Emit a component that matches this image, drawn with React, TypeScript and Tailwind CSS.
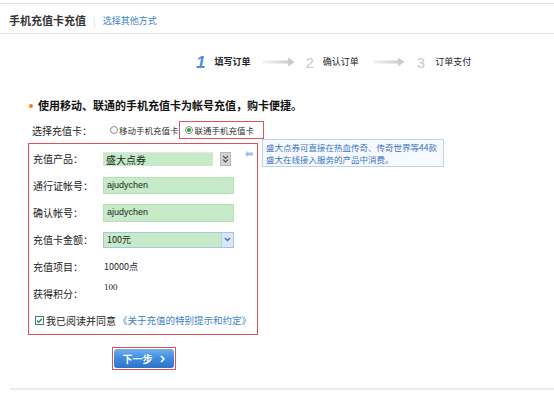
import React from "react";

function StepArrow({ className }: { className?: string }) {
  return (
    <svg width="32" height="10" viewBox="0 0 32 10" className={className}>
      <defs>
        <linearGradient id="ag" x1="0" x2="1" y1="0" y2="0">
          <stop offset="0" stopColor="#f2f2f2" />
          <stop offset="1" stopColor="#c4c4c4" />
        </linearGradient>
      </defs>
      <path d="M0 3.5h25V0.5L31.5 5 25 9.5V6.5H0z" fill="url(#ag)" />
    </svg>
  );
}

function Row({ label, children }: { label: string; children?: React.ReactNode }) {
  return (
    <div className="h-[27px] flex items-center">
      <span className="w-[74px] pl-[4px] text-[10px] text-[#222] shrink-0">{label}</span>
      {children}
    </div>
  );
}

export default function App() {
  return (
    <div className="w-[554px] h-[395px] bg-white overflow-hidden text-[#222]" style={{ fontFamily: '"Noto Sans CJK SC", "Liberation Sans", sans-serif' }}>
      <div className="h-[3px]" />
      <div className="h-[31px] border-y border-[#dedede] flex items-center pl-[9px] pt-[4px]">
        <span className="text-[11px] font-bold text-[#333] leading-none">手机充值卡充值</span>
        <span className="mx-[7px] text-[10px] text-[#ddd] leading-none">|</span>
        <a className="text-[9px] text-[#3a7fc6] leading-none">选择其他方式</a>
      </div>

      <div className="h-[56px] flex items-center pl-[196px]">
        <span className="text-[17px] font-bold italic text-[#4b8ed6] leading-none" style={{ fontFamily: '"Liberation Sans", sans-serif' }}>1</span>
        <span className="ml-[9px] text-[9px] font-bold text-[#222]">填写订单</span>
        <StepArrow className="ml-[13px]" />
        <span className="ml-[10px] text-[15px] text-[#c8c8c8] leading-none" style={{ fontFamily: '"Liberation Sans", sans-serif' }}>2</span>
        <span className="ml-[9px] text-[9px] text-[#222]">确认订单</span>
        <StepArrow className="ml-[14px]" />
        <span className="ml-[12px] text-[15px] text-[#c8c8c8] leading-none" style={{ fontFamily: '"Liberation Sans", sans-serif' }}>3</span>
        <span className="ml-[10px] text-[9px] text-[#222]">订单支付</span>
      </div>

      <div className="h-[31px] flex items-center pl-[29px]">
        <span className="w-[4px] h-[4px] rounded-full bg-[#f07c1c]" />
        <span className="ml-[5px] text-[11px] font-bold text-[#111]">使用移动、联通的手机充值卡为帐号充值，购卡便捷。</span>
      </div>

      <div className="h-[18px] flex items-center pl-[32px]">
        <span className="w-[78px] text-[10px] text-[#222]">选择充值卡：</span>
        <span className="w-[8px] h-[8px] rounded-full border border-[#8a8a8a] bg-white" />
        <span className="ml-[1px] text-[8.5px] text-[#333] whitespace-nowrap">移动手机充值卡</span>
        <div className="ml-[0px] h-[18px] w-[85px] border border-[#e0505a] flex items-center pl-[5px]">
          <span className="w-[8px] h-[8px] rounded-full border border-[#8a8a8a] bg-white flex items-center justify-center">
            <span className="w-[4px] h-[4px] rounded-full bg-[#2e9a3e]" />
          </span>
          <span className="ml-[2px] text-[8.5px] text-[#333] whitespace-nowrap">联通手机充值卡</span>
        </div>
      </div>

      <div className="flex items-start">
        <div className="ml-[28px] mt-[4px] w-[230px] h-[192px] border border-[#e0505a] pt-[1px]">
          <Row label="充值产品：">
            <div className="w-[110px] h-[14px] bg-[#c7ebc8] border-t border-[#e4e4e4] flex items-center pl-[3px] text-[10px] text-[#222]">盛大点券</div>
            <div className="ml-[7px] w-[11px] h-[14px] bg-[#d4d4d4] border border-[#b8b8b8] flex items-center justify-center">
              <svg width="7" height="8" viewBox="0 0 7 8"><path d="M1 1l2.5 2.5L6 1M1 4.5l2.5 2.5L6 4.5" stroke="#555" strokeWidth="1.2" fill="none" /></svg>
            </div>
            <svg width="8" height="6" viewBox="0 0 8 6" className="ml-[14px] self-start mt-[6px]"><path d="M0 3l3-3v1.5h5v3H3V6z" fill="#9cc4ea" /></svg>
          </Row>
          <Row label="通行证帐号：">
            <div className="w-[131px] h-[17px] bg-[#c7ebc8] border border-[#b7dfb8] flex items-center pl-[3px] text-[9px] text-[#222]" style={{ fontFamily: '"Liberation Sans", sans-serif' }}>ajudychen</div>
          </Row>
          <Row label="确认帐号：">
            <div className="w-[131px] h-[18px] bg-[#c7ebc8] border border-[#b7dfb8] flex items-center pl-[3px] text-[9px] text-[#222]" style={{ fontFamily: '"Liberation Sans", sans-serif' }}>ajudychen</div>
          </Row>
          <Row label="充值卡金额：">
            <div className="w-[131px] h-[16px] bg-[#c7ebc8] border border-[#a9c4e2] flex items-center text-[9px] text-[#222]">
              <span className="flex-1 pl-[3px]">100元</span>
              <div className="w-[12px] h-full bg-[#dbe7f7] border-l border-[#b9cde8] flex items-center justify-center">
                <svg width="7" height="5" viewBox="0 0 7 5"><path d="M1 1l2.5 2.5L6 1" stroke="#3a6fb8" strokeWidth="1.4" fill="none" /></svg>
              </div>
            </div>
          </Row>
          <Row label="充值项目：">
            <span className="ml-[1px] text-[9px] text-[#222]">10000点</span>
          </Row>
          <Row label="获得积分：">
            <span className="ml-[1px] self-start mt-[1px] text-[9px] text-[#222]" style={{ fontFamily: '"Liberation Serif", serif' }}>100</span>
          </Row>
          <div className="h-[27px] flex items-center pl-[6px] whitespace-nowrap">
            <svg width="9" height="9" viewBox="0 0 9 9" className="shrink-0"><rect x="0.5" y="0.5" width="8" height="8" fill="#fff" stroke="#3f7b91" /><path d="M2 4.5l1.8 1.8L7 2.8" stroke="#2a8a3a" strokeWidth="1.3" fill="none" /></svg>
            <span className="ml-[2px] text-[10px] text-[#222]">我已阅读并同意</span>
            <span className="ml-[2px] text-[9.5px] text-[#3a7fc6]">《关于充值的特别提示和约定》</span>
          </div>
        </div>
        <div className="ml-[4px] w-[182px] h-[28px] border border-[#bcd3ea] bg-[#f6f9fd] px-[3px] pt-[1px] text-[8.5px] leading-[12px] text-[#3a74c0] whitespace-nowrap">
          <div>盛大点券可直接在热血传奇、传奇世界等44款</div>
          <div>盛大在线接入服务的产品中消费。</div>
        </div>
      </div>

      <div className="mt-[12px] ml-[112px] w-[64px] h-[23px] border border-[#e0505a] p-[1px]">
        <button className="w-full h-full rounded-[3px] bg-gradient-to-b from-[#6fb0ee] via-[#3e8ce0] to-[#2c74c8] flex items-center justify-center gap-[7px] text-white text-[10px] font-bold">
          <span>下一步</span>
          <svg width="6" height="8" viewBox="0 0 6 8"><path d="M1 1l3 3-3 3" stroke="#fff" strokeWidth="1.6" fill="none" /></svg>
        </button>
      </div>

      <div className="mt-[18px] ml-[10px] border-t-2 border-[#ececec]" />
    </div>
  );
}
